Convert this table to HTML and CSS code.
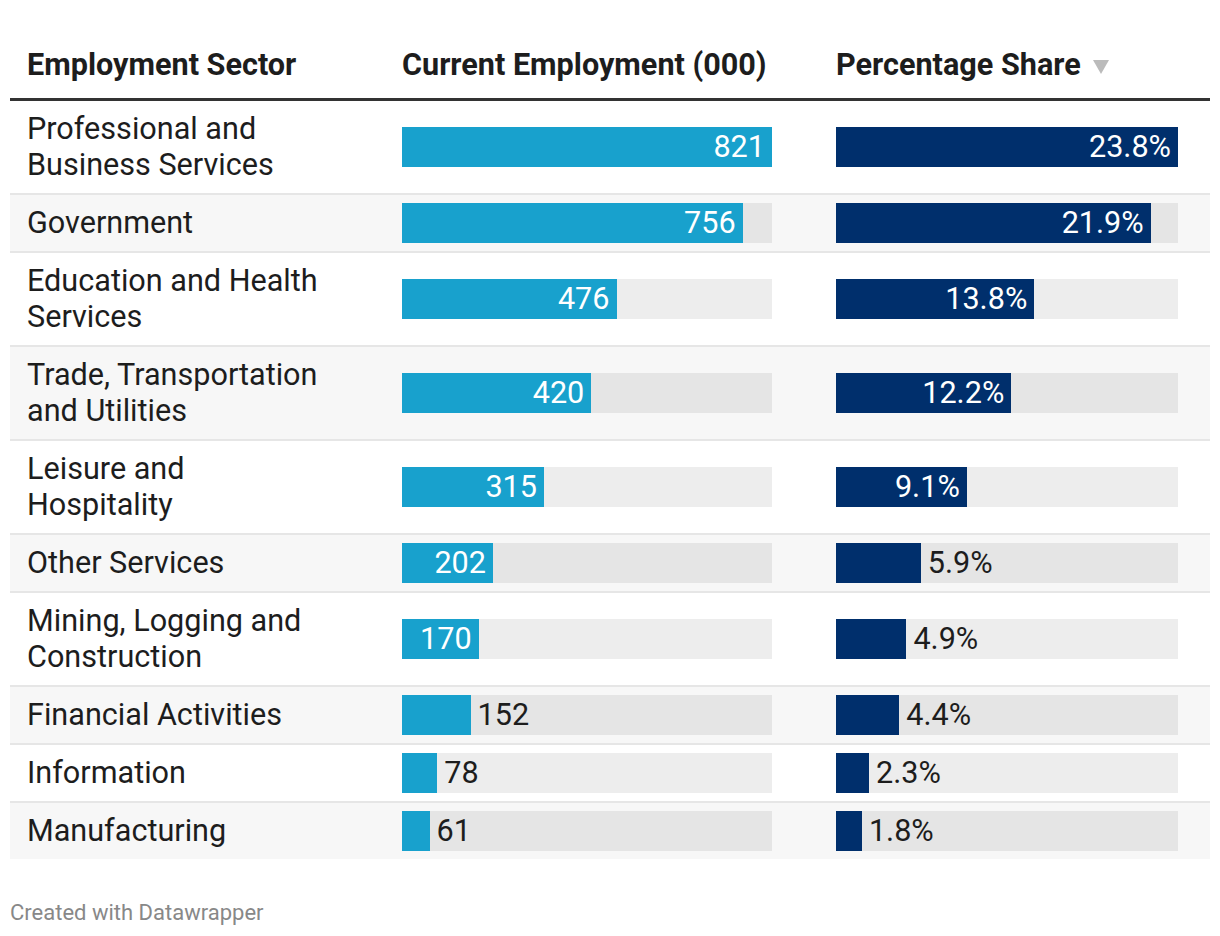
FILE: index.html
```html
<!DOCTYPE html>
<html lang="en">
<head>
<meta charset="utf-8">
<title>Employment by Sector</title>
<link rel="stylesheet" href="styles.css">
</head>
<body>
<div class="page">
  <div class="table">
    <div class="row head">
      <div class="cell c1">Employment Sector</div>
      <div class="cell c2">Current Employment (000)</div>
      <div class="cell c3">Percentage Share <span class="sort"></span></div>
    </div>

    <div class="row">
      <div class="cell c1">Professional and<br>Business Services</div>
      <div class="cell c2"><div class="bar emp"><div class="fill" style="width:370px"><span>821</span></div></div></div>
      <div class="cell c3"><div class="bar pct"><div class="fill" style="width:342px"><span>23.8%</span></div></div></div>
    </div>

    <div class="row">
      <div class="cell c1">Government</div>
      <div class="cell c2"><div class="bar emp"><div class="fill" style="width:340.7px"><span>756</span></div></div></div>
      <div class="cell c3"><div class="bar pct"><div class="fill" style="width:314.7px"><span>21.9%</span></div></div></div>
    </div>

    <div class="row">
      <div class="cell c1">Education and Health<br>Services</div>
      <div class="cell c2"><div class="bar emp"><div class="fill" style="width:214.5px"><span>476</span></div></div></div>
      <div class="cell c3"><div class="bar pct"><div class="fill" style="width:198.3px"><span>13.8%</span></div></div></div>
    </div>

    <div class="row">
      <div class="cell c1">Trade, Transportation<br>and Utilities</div>
      <div class="cell c2"><div class="bar emp"><div class="fill" style="width:189.3px"><span>420</span></div></div></div>
      <div class="cell c3"><div class="bar pct"><div class="fill" style="width:175.3px"><span>12.2%</span></div></div></div>
    </div>

    <div class="row">
      <div class="cell c1">Leisure and<br>Hospitality</div>
      <div class="cell c2"><div class="bar emp"><div class="fill" style="width:142px"><span>315</span></div></div></div>
      <div class="cell c3"><div class="bar pct"><div class="fill" style="width:130.8px"><span>9.1%</span></div></div></div>
    </div>

    <div class="row">
      <div class="cell c1">Other Services</div>
      <div class="cell c2"><div class="bar emp"><div class="fill" style="width:91px"><span>202</span></div></div></div>
      <div class="cell c3"><div class="bar pct"><div class="fill" style="width:84.8px"></div><span class="out">5.9%</span></div></div>
    </div>

    <div class="row">
      <div class="cell c1">Mining, Logging and<br>Construction</div>
      <div class="cell c2"><div class="bar emp"><div class="fill" style="width:76.6px"><span>170</span></div></div></div>
      <div class="cell c3"><div class="bar pct"><div class="fill" style="width:70.4px"></div><span class="out">4.9%</span></div></div>
    </div>

    <div class="row">
      <div class="cell c1">Financial Activities</div>
      <div class="cell c2"><div class="bar emp"><div class="fill" style="width:68.5px"></div><span class="out">152</span></div></div>
      <div class="cell c3"><div class="bar pct"><div class="fill" style="width:63.2px"></div><span class="out">4.4%</span></div></div>
    </div>

    <div class="row">
      <div class="cell c1">Information</div>
      <div class="cell c2"><div class="bar emp"><div class="fill" style="width:35.2px"></div><span class="out">78</span></div></div>
      <div class="cell c3"><div class="bar pct"><div class="fill" style="width:33.1px"></div><span class="out">2.3%</span></div></div>
    </div>

    <div class="row">
      <div class="cell c1">Manufacturing</div>
      <div class="cell c2"><div class="bar emp"><div class="fill" style="width:27.5px"></div><span class="out">61</span></div></div>
      <div class="cell c3"><div class="bar pct"><div class="fill" style="width:25.9px"></div><span class="out">1.8%</span></div></div>
    </div>
  </div>

  <div class="footer">Created with Datawrapper</div>
</div>
</body>
</html>
```

FILE: styles.css
```css
html, body {
  margin: 0;
  padding: 0;
  background: #ffffff;
}

body {
  font-family: Roboto, "Liberation Sans", Arial, sans-serif;
  color: #1d1d1d;
}

.page {
  padding: 37px 10px 0 10px;
}

.table {
  width: 1200px;
  display: flex;
  flex-direction: column;
}

.row {
  display: grid;
  grid-template-columns: 392px 434px 374px;
  align-items: center;
  font-size: 30.6px;
  line-height: 36px;
  border-bottom: 2px solid #e6e6e6;
}

.row:nth-child(odd):not(.head) {
  background: #f7f7f7;
}

.row:last-child {
  border-bottom: none;
}

.row.head {
  font-weight: 700;
  border-bottom: 3px solid #333333;
}

.cell {
  padding: 0;
}

.c1 {
  padding: 10px 0 10px 17px;
}

.head .cell {
  padding-top: 10px;
  padding-bottom: 15px;
}

.c3 {
  display: flex;
  align-items: center;
}

.sort {
  display: inline-block;
  width: 0;
  height: 0;
  margin-left: 12px;
  margin-top: 4px;
  border-left: 8px solid transparent;
  border-right: 8px solid transparent;
  border-top: 14px solid #bbbbbb;
}

.bar {
  height: 40px;
  display: flex;
  align-items: center;
  background: rgba(0, 0, 0, 0.07);
}

.bar.emp {
  width: 370px;
}

.bar.pct {
  width: 342px;
}

.fill {
  height: 40px;
  display: flex;
  align-items: center;
  justify-content: flex-end;
  box-sizing: border-box;
  padding-right: 7px;
  color: #ffffff;
  flex: none;
}

.emp .fill {
  background: #18a1cd;
}

.pct .fill {
  background: #002f6c;
}

.out {
  padding-left: 7px;
  color: #1d1d1d;
}

.footer {
  margin-top: 42px;
  font-size: 22px;
  line-height: 24px;
  color: #888888;
}
```
